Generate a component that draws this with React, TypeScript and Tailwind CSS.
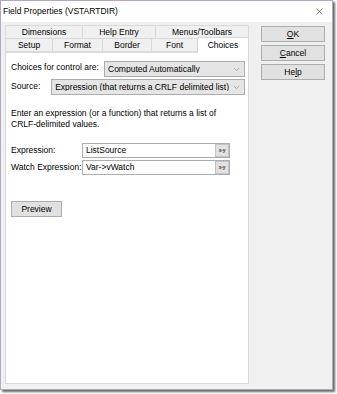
import { ChevronDown, X } from 'lucide-react'

const font = { fontFamily: '"Liberation Sans", Arial, sans-serif' }

function Tab({ label, active, className = '' }: { label: string; active?: boolean; className?: string }) {
  return (
    <div
      className={
        active
          ? `relative z-10 -mb-px flex h-[16px] items-start justify-center border border-b-0 border-[#d9d9d9] bg-white pt-[3px] ${className}`
          : `flex h-[14px] items-center justify-center border border-[#d9d9d9] bg-[#f0f0f0] ${className}`
      }
    >
      {label}
    </div>
  )
}

function Select({ value, className = '' }: { value: string; className?: string }) {
  return (
    <div className={`flex h-[16px] items-center justify-between border border-[#adadad] bg-[#e5e5e5] pl-[3px] pr-[3px] ${className}`}>
      <span className="overflow-hidden whitespace-nowrap">{value}</span>
      <ChevronDown size={9} strokeWidth={1.3} className="ml-[3px] shrink-0 text-[#666]" />
    </div>
  )
}

function ExprInput({ value }: { value: string }) {
  return (
    <div className="flex h-[15px] w-[148px] items-center border border-[#abadb3] bg-white">
      <span className="flex-1 pl-[3px]">{value}</span>
      <div className="flex h-[13px] w-[14px] items-center justify-center border border-[#c3c3c3] bg-[#e1e1e1] text-[5px] font-bold tracking-tighter text-[#444]">
        x-y
      </div>
    </div>
  )
}

function Btn({ children, className = '' }: { children: React.ReactNode; className?: string }) {
  return (
    <div className={`flex h-[16px] items-center justify-center border border-[#adadad] bg-[#e1e1e1] ${className}`}>
      {children}
    </div>
  )
}

export default function App() {
  return (
    <div className="h-[394px] w-[337px] bg-white text-[8.5px] leading-none text-black" style={font}>
      <div className="flex h-[390px] w-[333px] flex-col border border-[#b3a6c6] bg-[#f0f0f0] shadow-[2px_2px_2px_rgba(0,0,0,0.6)]">
        <div className="flex h-[21px] shrink-0 items-center justify-between bg-white pl-[2px] pr-[7px]">
          <span className="text-[8.5px]">Field Properties (VSTARTDIR)</span>
          <X size={11} strokeWidth={1.1} className="text-[#222]" />
        </div>
        <div className="flex flex-1 gap-[12px] pl-[4px] pt-[3px]">
          <div className="flex w-[244px] flex-col pb-[5px]">
            <div className="flex">
              <Tab label="Dimensions" className="w-[78px]" />
              <Tab label="Help Entry" className="-ml-px w-[74px]" />
              <Tab label="Menus/Toolbars" className="-ml-px w-[94px]" />
            </div>
            <div className="-mt-[2px] flex items-end">
              <Tab label="Setup" className="w-[48px]" />
              <Tab label="Format" className="-ml-px w-[51px]" />
              <Tab label="Border" className="-ml-px w-[50px]" />
              <Tab label="Font" className="-ml-px w-[47px]" />
              <Tab label="Choices" active className="-ml-px w-[52px]" />
            </div>
            <div className="flex-1 border border-[#d9d9d9] bg-white pl-[5px] pr-[3px] pt-[8px]">
              <div className="flex items-start">
                <span className="w-[93px] pt-[2px]">Choices for control are:</span>
                <Select value="Computed Automatically" className="flex-1" />
              </div>
              <div className="mt-[2px] flex items-start">
                <span className="w-[48px] pt-[3px]">Source:</span>
                <Select value="Expression (that returns a CRLF delimited list)" className="flex-1" />
              </div>
              <p className="mt-[13px] leading-[11px]">
                Enter an expression (or a function) that returns a list of
                <br />
                CRLF-delimited values.
              </p>
              <div className="mt-[13px] flex items-center">
                <span className="w-[71px]">Expression:</span>
                <ExprInput value="ListSource" />
              </div>
              <div className="mt-[2px] flex items-center">
                <span className="w-[71px]">Watch Expression:</span>
                <ExprInput value="Var->vWatch" />
              </div>
              <Btn className="mt-[26px] w-[51px]">Preview</Btn>
            </div>
          </div>
          <div className="flex w-[64px] flex-col gap-[3px] pt-[1px]">
            <Btn>
              <span className="underline">O</span>K
            </Btn>
            <Btn>
              <span className="underline">C</span>ancel
            </Btn>
            <Btn>
              He<span className="underline">l</span>p
            </Btn>
          </div>
        </div>
      </div>
    </div>
  )
}
